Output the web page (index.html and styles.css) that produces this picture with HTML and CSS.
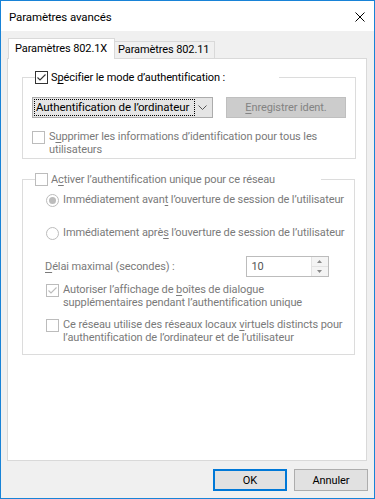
FILE: index.html
```html
<!DOCTYPE html>
<html>
<head>
    <meta charset="UTF-8">
    <title>Paramètres avancés</title>
    <link rel="stylesheet" href="styles.css">
</head>
<body>
    <div class="window">
        <div class="titlebar">
            <span class="title">Paramètres avancés</span>
            <svg class="close" width="10" height="10" viewBox="0 0 10 10">
                <path d="M0.5 0.5 L9.5 9.5 M9.5 0.5 L0.5 9.5" stroke="#000" stroke-width="1"/>
            </svg>
        </div>

        <div class="client">
            <div class="tabs">
                <div class="tab active">Paramètres 802.1X</div>
                <div class="tab">Paramètres 802.11</div>
            </div>

            <div class="panel">
                <fieldset class="group first">
                    <legend>
                        <span class="cb checked">
                            <svg width="11" height="11" viewBox="0 0 11 11"><path d="M1.5 5.5 L4 8 L9.5 2.5" fill="none" stroke="#333" stroke-width="1.1"/></svg>
                        </span>
                        <span>S<u>p</u>écifier le mode d’authentification :</span>
                    </legend>

                    <div class="auth-row">
                        <div class="combo">
                            <span class="combo-text">Authentification de l’ordinateur</span>
                            <svg class="chevron" width="9" height="5" viewBox="0 0 9 5"><path d="M0.5 0.5 L4.5 4.5 L8.5 0.5" fill="none" stroke="#555" stroke-width="1"/></svg>
                        </div>
                        <div class="btn disabled"><u>E</u>nregistrer ident.</div>
                    </div>

                    <div class="check disabled supprimer">
                        <span class="cb"></span>
                        <span class="label">S<u>u</u>pprimer les informations d’identification pour tous les<br>utilisateurs</span>
                    </div>
                </fieldset>

                <fieldset class="group second disabled">
                    <legend>
                        <span class="cb"></span>
                        <span>A<u>c</u>tiver l’authentification unique pour ce réseau</span>
                    </legend>

                    <div class="check radio-row first-radio">
                        <span class="radio on"></span>
                        <span class="label">Immédiatement avan<u>t</u> l’ouverture de session de l’utilisateur</span>
                    </div>
                    <div class="check radio-row second-radio">
                        <span class="radio"></span>
                        <span class="label">Immédiatement aprè<u>s</u> l’ouverture de session de l’utilisateur</span>
                    </div>

                    <div class="delay-row">
                        <span class="delay-label"><u>D</u>élai maximal (secondes) :</span>
                        <div class="spin">
                            <span class="spin-value">10</span>
                            <div class="spin-buttons">
                                <div class="spin-btn"><svg width="5" height="3" viewBox="0 0 5 3"><path d="M2.5 0 L5 3 L0 3 Z" fill="#8a8a8a"/></svg></div>
                                <div class="spin-btn"><svg width="5" height="3" viewBox="0 0 5 3"><path d="M0 0 L5 0 L2.5 3 Z" fill="#8a8a8a"/></svg></div>
                            </div>
                        </div>
                    </div>

                    <div class="check autoriser">
                        <span class="cb">
                            <svg width="11" height="11" viewBox="0 0 11 11"><path d="M1.5 5.5 L4 8 L9.5 2.5" fill="none" stroke="#bcbcbc" stroke-width="1.1"/></svg>
                        </span>
                        <span class="label">Autoriser l’affichage de <u>b</u>oîtes de dialogue<br>supplémentaires pendant l’authentification unique</span>
                    </div>
                    <div class="check vlan">
                        <span class="cb"></span>
                        <span class="label">Ce réseau utilise des réseaux locaux <u>v</u>irtuels distincts pour<br>l’authentification de l’ordinateur et de l’utilisateur</span>
                    </div>
                </fieldset>
            </div>

            <div class="buttons">
                <div class="btn default">OK</div>
                <div class="btn">Annuler</div>
            </div>
        </div>
    </div>
</body>
</html>
```
FILE: styles.css
```css
* {
    margin: 0;
    padding: 0;
    box-sizing: border-box;
}

body {
    font-family: Roboto, "Liberation Sans", sans-serif;
    font-size: 11px;
    letter-spacing: -0.1px;
    color: #000;
    background: #fff;
}

u {
    text-decoration-thickness: 1px;
    text-underline-offset: 2px;
}

.window {
    width: 375px;
    height: 499px;
    border: 1px solid #1883d7;
    display: flex;
    flex-direction: column;
}

/* title bar */
.titlebar {
    height: 30px;
    background: #fff;
    display: flex;
    align-items: center;
    justify-content: space-between;
    padding: 0 9px 0 8px;
}
.title {
    font-size: 11.5px;
    padding-top: 1px;
}
.close {
    display: block;
    margin-top: 1px;
}

.client {
    flex: 1;
    background: #f0f0f0;
    padding: 7px 7px 7px 6px;
    display: flex;
    flex-direction: column;
}

/* tabs */
.tabs {
    height: 20px;
    display: flex;
    align-items: flex-end;
    position: relative;
    z-index: 1;
}
.tab {
    height: 17px;
    width: 100px;
    border: 1px solid #d9d9d9;
    border-left: none;
    border-bottom: none;
    background: #f0f0f0;
    padding-left: 3px;
    line-height: 16px;
}
.tab.active {
    height: 21px;
    width: 107px;
    margin-left: 1px;
    margin-bottom: -1px;
    border-left: 1px solid #d9d9d9;
    background: #fff;
    padding-left: 6px;
    line-height: 19px;
}

.panel {
    height: 403px;
    background: #fff;
    border: 1px solid #d9d9d9;
}

/* group boxes */
.group {
    border: 1px solid #dcdcdc;
    margin: 0 13px 0 14px;
    padding: 0 9px;
    white-space: nowrap;
}
.group legend {
    display: flex;
    align-items: center;
    height: 15px;
    margin-left: 3px;
    gap: 3px;
}
.group.first {
    margin-top: 11px;
    padding-bottom: 2px;
}
.group.first legend {
    padding-right: 54px;
}
.group.second {
    margin-top: 13px;
    padding-bottom: 10px;
}
.group.second legend {
    padding-right: 46px;
}

.disabled,
.disabled .label,
.group.disabled legend {
    color: #7a7a7a;
}

/* checkbox / radio */
.cb {
    width: 13px;
    height: 13px;
    border: 1px solid #333;
    background: #fff;
    display: flex;
    align-items: center;
    justify-content: center;
    flex-shrink: 0;
}
.disabled .cb,
.group.disabled .cb {
    border-color: #bcbcbc;
}
.radio {
    width: 13px;
    height: 13px;
    border: 1px solid #bcbcbc;
    border-radius: 50%;
    background: #fff;
    display: flex;
    align-items: center;
    justify-content: center;
    flex-shrink: 0;
}
.radio.on::after {
    content: '';
    width: 7px;
    height: 7px;
    border-radius: 50%;
    background: #bcbcbc;
}

.check {
    display: flex;
    align-items: flex-start;
    line-height: 13px;
    gap: 4px;
}
.check .cb,
.check .radio {
    margin-top: 1px;
}
.check .label {
    white-space: nowrap;
}

/* first group content */
.auth-row {
    display: flex;
    margin-top: 12px;
    gap: 13px;
}
.combo {
    width: 181px;
    height: 21px;
    background: #e5e5e5;
    border: 1px solid #acacac;
    display: flex;
    align-items: center;
    justify-content: space-between;
    padding: 0 5px 0 2px;
}
.combo-text {
    outline: 1px dotted #000;
    padding: 1px 5px 1px 1px;
    line-height: 13px;
    font-size: 11.5px;
}
.chevron {
    display: block;
}
.btn {
    height: 21px;
    width: 120px;
    display: flex;
    align-items: center;
    justify-content: center;
    background: #e1e1e1;
    border: 1px solid #adadad;
}
.btn.disabled {
    background: #cccccc;
    border-color: #bfbfbf;
    color: #838383;
}
.supprimer {
    margin-top: 12px;
}

/* second group content */
.radio-row {
    margin-left: 14px;
}
.first-radio {
    margin-top: 6px;
}
.second-radio {
    margin-top: 19px;
}
.delay-row {
    display: flex;
    align-items: center;
    justify-content: space-between;
    margin-top: 16px;
    padding-left: 13px;
    padding-right: 16px;
}
.spin {
    width: 83px;
    height: 21px;
    border: 1px solid #bcbcbc;
    background: #fff;
    display: flex;
}
.spin-value {
    flex: 1;
    padding-left: 5px;
    line-height: 19px;
    color: #555;
}
.spin-buttons {
    width: 17px;
    border-left: 1px solid #e3e3e3;
    background: #f4f4f4;
    display: flex;
    flex-direction: column;
}
.spin-btn {
    flex: 1;
    display: flex;
    align-items: center;
    justify-content: center;
}
.spin-btn + .spin-btn {
    border-top: 1px solid #e3e3e3;
}
.spin-btn svg {
    display: block;
}
.autoriser {
    margin-top: 6px;
    margin-left: 14px;
}
.vlan {
    margin-top: 9px;
    margin-left: 14px;
}

/* dialog buttons */
.buttons {
    display: flex;
    justify-content: flex-end;
    gap: 7px;
    margin-top: 8px;
    margin-right: -1px;
}
.buttons .btn {
    width: 74px;
    height: 22px;
}
.btn.default {
    border: 2px solid #0078d7;
}
```
